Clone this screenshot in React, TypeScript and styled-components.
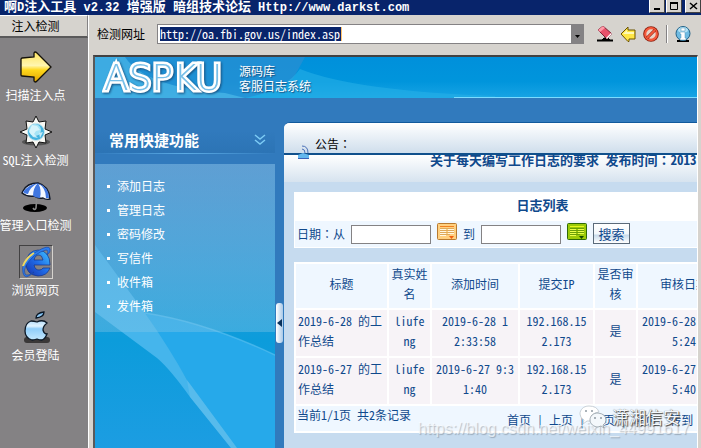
import React from "react";
import styled, { createGlobalStyle, css } from "styled-components";

const songti = `"Noto Sans Mono CJK SC", "Noto Sans CJK SC", "Liberation Mono", monospace`;

const Global = createGlobalStyle`
  * { box-sizing: border-box; }
  body { margin: 0; overflow: hidden; background: #d6d3ce; }
  button, input { font: inherit; color: inherit; }
  button { padding: 0; border: 0; background: none; cursor: pointer; }
`;

const Window = styled.div`
  position: relative;
  display: flex;
  flex-direction: column;
  min-height: 100vh;
  overflow: hidden;
  background: #d6d3ce;
  color: #000;
  font: 12px/16px ${songti};
`;

const TitleBar = styled.header`
  display: flex;
  justify-content: space-between;
  align-items: flex-start;
  height: 15px;
  padding-left: 4px;
  background: #08246b;
  color: #fff;
`;

const Title = styled.h1`
  margin: 0;
  font-size: 13px;
  line-height: 12px;
  font-weight: 700;
  white-space: pre;
`;

const TitleLatin = styled.span`
  font: 700 12px/12px "Liberation Mono", monospace;
`;

const WindowButtons = styled.div`
  display: flex;
  gap: 1px;
`;

const WindowButton = styled.button`
  display: grid;
  place-items: center;
  width: 16px;
  height: 13px;
  background: #d6d3ce;
  border: solid;
  border-width: 0 1px 1px;
  border-color: #fff #424142 #424142 #fff;
  &:last-child { margin-left: 2px; }
`;

const Body = styled.div`
  flex: 1;
  display: grid;
  grid-template-columns: 89px minmax(0, 1fr);
`;

const Sidebar = styled.nav`
  display: flex;
  flex-direction: column;
  background: #848284;
  border-right: 1px solid #fff;
`;

const SideTab = styled.button`
  height: 23px;
  padding-right: 16px;
  background: #d6d3ce;
  border-top: 1px solid #fff;
  border-right: 1px solid #848284;
  border-bottom: 2px solid #5a595a;
`;

const Tools = styled.div`
  display: flex;
  flex-direction: column;
  gap: 12px;
  padding-top: 12px;
  width: 71px;
`;

const Tool = styled.button`
  display: flex;
  flex-direction: column;
  align-items: center;
  gap: 3px;
  color: #fff;
  white-space: nowrap;
`;

const ToolIcon = styled.span<{ $active?: boolean }>`
  display: grid;
  place-items: center;
  width: 34px;
  height: 34px;
  ${(p) => p.$active && css`
    border: 1px solid;
    border-color: #424142 #d6d3ce #d6d3ce #424142;
  `}
`;

const Work = styled.div`
  display: flex;
  flex-direction: column;
  min-width: 0;
  padding: 0 3px 0 4px;
`;

const Toolbar = styled.div`
  display: flex;
  align-items: center;
  height: 40px;
  padding: 0 7px 2px 4px;
`;

const AddressLabel = styled.label`
  margin-right: 12px;
  white-space: nowrap;
`;

const Combo = styled.div`
  flex: 1;
  display: flex;
  justify-content: space-between;
  height: 20px;
  background: #fff;
  border: 1px solid #848284;
  margin-right: 13px;
`;

const Address = styled.input`
  width: 182px;
  height: 14px;
  margin: 2px 0 0 2px;
  padding: 0;
  border: 0;
  border-right: 1px solid #ffc36b;
  background: #08246b;
  color: #fff;
  outline: none;
`;

const ComboArrow = styled.button`
  width: 12px;
  background: #848284;
`;

const ToolbarIcons = styled.div`
  display: flex;
  align-items: center;
  gap: 7px;
`;

const ToolbarButton = styled.button`
  width: 16px;
  height: 16px;
  svg { display: block; }
`;

const Separator = styled.span`
  width: 2px;
  height: 18px;
  border-left: 1px solid #848284;
  border-right: 1px solid #fff;
`;

const Browser = styled.section`
  flex: 1;
  display: flex;
  flex-direction: column;
  overflow: hidden;
  border: solid;
  border-width: 2px 1px 0 2px;
  border-color: #424142 #fff #fff #5a595a;
  background: #317abd;
`;

const Banner = styled.header`
  position: relative;
  display: flex;
  align-items: center;
  height: 41px;
  padding-left: 9px;
  overflow: hidden;
  background: linear-gradient(#0090db, #0095dc 60%, #18a4e4);
  color: #fff;
`;

const BannerArt = styled.svg`
  position: absolute;
  inset: 0;
`;

const Logo = styled.strong`
  position: relative;
  width: 135px;
  font: 200 36px/38px "DejaVu Sans", sans-serif;
  color: #78bfe8;
  -webkit-text-stroke: 5px #fff;
  paint-order: stroke fill;
  filter: drop-shadow(1px 1px 1px #17507f);
`;

const BannerText = styled.span`
  position: relative;
  line-height: 15px;
  text-shadow: 1px 1px 1px #17507f;
`;

const Site = styled.div`
  flex: 1;
  display: grid;
  grid-template-columns: 180px 9px minmax(0, 1fr);
`;

const MenuColumn = styled.aside`
  display: flex;
  flex-direction: column;
  color: #fff;
`;

const MenuHeading = styled.h2`
  display: flex;
  align-items: center;
  justify-content: space-between;
  height: 56px;
  margin: 0 0 10px;
  padding: 28px 9px 0 14px;
  font-size: 15px;
  line-height: 20px;
  border-bottom: 1px solid;
  border-image: linear-gradient(90deg, #317abd, #5aaae4 50%, #317abd) 1;
  background: linear-gradient(#317abd 60%, #2c74b5);
`;

const MenuBody = styled.div`
  position: relative;
  flex: 1;
  overflow: hidden;
  background: #179fe1;
`;

const MenuArt = styled.svg`
  position: absolute;
  top: 0;
  left: 0;
`;

const MenuList = styled.ul`
  position: relative;
  margin: 0;
  padding: 10px 0 14px 12px;
  list-style: none;
  background: linear-gradient(rgba(115, 170, 215, 0.5), rgba(140, 200, 230, 0.35));
`;

const MenuItem = styled.li`
  display: flex;
  align-items: center;
  gap: 7px;
  height: 24px;
  &::before {
    content: "";
    width: 3px;
    height: 3px;
    background: #fff;
  }
`;

const MenuLink = styled.a`
  color: #fff;
  text-decoration: none;
`;

const Splitter = styled.div`
  padding: 205px 1px 0;
`;

const SplitHandle = styled.button`
  display: grid;
  place-items: center;
  width: 7px;
  height: 40px;
  border-radius: 3px;
  background: linear-gradient(90deg, #fff, #a9c9e8);
`;

const Main = styled.main`
  margin-top: 24px;
  min-width: 0;
  overflow: hidden;
  border-top: 1px solid #10599c;
  border-top-left-radius: 6px;
  background: #c6dbef;
  color: #10498c;
`;

const Colon = styled.span`
  font-family: "Noto Sans CJK TC", sans-serif;
`;

const Notice = styled.div`
  display: flex;
  align-items: flex-end;
  height: 32px;
  gap: 5px;
  padding: 0 0 0 14px;
  color: #000;
  background: linear-gradient(#fff, #cfdeec);
  border-bottom: 2px solid #10508c;
`;

const NoticeIcon = styled.svg`
  position: relative;
  margin-bottom: -7px;
`;

const NoticeLabel = styled.span`
  line-height: 18px;
`;

const Marquee = styled.div`
  height: 27px;
  padding-left: 146px;
  overflow: hidden;
  font-size: 13px;
  line-height: 10px;
  font-weight: 700;
  white-space: nowrap;
  background: linear-gradient(#fff, #d6e3ef);
`;

const Panels = styled.div`
  display: flex;
  flex-direction: column;
  gap: 14px;
  min-width: 507px;
  padding: 10px 0 16px 10px;
`;

const SearchPanel = styled.form`
  width: 497px;
  padding: 0 1px 1px;
  background: #fff;
`;

const PanelTitle = styled.h3`
  margin: 0;
  font-size: 13px;
  line-height: 26px;
  padding-bottom: 3px;
  text-align: center;
`;

const SearchRow = styled.div`
  display: flex;
  align-items: center;
  height: 26px;
  padding-left: 2px;
  gap: 6px;
  background: #eff7ff;
`;

const DateInput = styled.input`
  width: 80px;
  height: 19px;
  border: 1px solid #848284;
  background: #fff;
`;

const CalendarButton = styled.button`
  height: 18px;
  margin-bottom: 4px;
  svg { display: block; }
`;

const SearchButton = styled.button`
  width: 37px;
  height: 21px;
  margin-bottom: 2px;
  font-size: 13px;
  line-height: 17px;
  border: 1px solid #5a6a7a;
  background: linear-gradient(#fff, #f3f8fc 50%, #c9dced 60%, #fff);
`;

const LogTable = styled.table`
  table-layout: fixed;
  width: 497px;
  border-collapse: collapse;
  word-break: break-all;
  white-space: pre-line;
  line-height: 20px;
`;

const cell = css`
  border: 2px solid #fff;
  padding: 0 3px 4px;
  text-align: center;
  font-weight: 400;
`;

const HeadCell = styled.th`
  ${cell}
  height: 46px;
  padding: 0 2px 4px;
  background: #eff7ff;
`;

const Cell = styled.td<{ $left?: boolean }>`
  ${cell}
  height: 48px;
  background: #f7f3f7;
  ${(p) => p.$left && "text-align: left; padding-left: 2px;"}
`;

const FootCell = styled.td`
  height: 27px;
  padding: 0 0 2px 1px;
  border: 2px solid #fff;
  background: #eff7ff;
`;

const FootRow = styled.div`
  display: flex;
  line-height: 18px;
  white-space: pre;
`;

const Pager = styled.span`
  margin-left: 96px;
  padding-top: 5px;
`;

const PageLink = styled.a`
  color: inherit;
  text-decoration: none;
`;

const Watermark = styled.div`
  position: absolute;
  right: 21px;
  bottom: 20px;
  display: flex;
  align-items: center;
  gap: 5px;
  font: 17px/24px "Noto Sans CJK SC", sans-serif;
  color: #f4f8fc;
  text-shadow: 1px 1px 1px #444, 0 0 1px #666;
`;

const UrlMark = styled.div`
  position: absolute;
  right: 11px;
  bottom: 11px;
  font: 16px/18px "Liberation Sans", sans-serif;
  color: rgba(255, 255, 255, 0.6);
  text-shadow: 1px 1px 1px rgba(90, 100, 110, 0.4);
`;

const ArrowIcon = () => (
  <svg width="32" height="32" viewBox="0 0 32 32">
    <defs>
      <linearGradient id="gold" x1="0" y1="0" x2="0" y2="1">
        <stop offset="0" stopColor="#ffe45e" /><stop offset=".45" stopColor="#fff6b0" />
        <stop offset=".6" stopColor="#ffd81c" /><stop offset="1" stopColor="#e0a300" />
      </linearGradient>
    </defs>
    <path d="M2 7l12-1V2q1-2 3 0l14 14-14 14q-2 2-3 0v-4L2 25q-1 0-1-1V8z" fill="url(#gold)" stroke="#15120a" strokeWidth="1.3" />
  </svg>
);

const CompassIcon = () => (
  <svg width="32" height="32" viewBox="0 0 32 32">
    <ellipse cx="16" cy="26" rx="14" ry="3.5" fill="#555" />
    <path d="M16 0l3 6 7-1-1 8 7 3-7 3 1 8-7-1-3 6-3-6-7 1 1-8-7-3 7-3-1-8 7 1z" fill="#f8f8f4" stroke="#111" strokeWidth="1" />
    <circle cx="16" cy="16" r="8.5" fill="#45b3df" stroke="#cfe8ee" />
    <circle cx="15" cy="14" r="6" fill="#a7e4f6" />
    <path d="M12 9l5 1 3 4-4 1-2 3 4 4-5-1-4-5zM19 17l4-1-3 6z" fill="#e3f8fc" opacity=".8" />
  </svg>
);

const UmbrellaIcon = () => (
  <svg width="32" height="32" viewBox="0 0 32 32">
    <ellipse cx="15" cy="27" rx="12" ry="4" fill="#000" />
    <path d="M17 14l-1 13q-1 3-3 0" fill="none" stroke="#888" strokeWidth="1.600" />
    <path d="M3 10Q7 2 18 2q11 3 12 16-4 1-7-1-5 1-9-2-7 1-12-3z" fill="#f4f8ff" stroke="#101828" strokeWidth="1.4" />
    <path d="M18 2Q8 4 3 11q2 2 5 2 2-7 10-11zM18 2q-5 5-5 13 3 2 7 2 2-8-2-15zM18 2q8 5 8 15l3 0Q29 6 18 2z" fill="#3f76e0" />
  </svg>
);

const ExplorerIcon = () => (
  <svg width="32" height="32" viewBox="0 0 32 32">
    <defs>
      <linearGradient id="ie" x1="1" y1="0" x2="0" y2="1">
        <stop offset="0" stopColor="#42c8ff" /><stop offset=".5" stopColor="#206ce8" /><stop offset="1" stopColor="#1830a8" />
      </linearGradient>
    </defs>
    <path d="M30 19H14q1 5 5 5 3 0 4-2h7q-3 8-12 8Q6 29 6 17 7 5 18 4q12 1 12 15zM14 14h9q-1-5-4-5-4 0-5 5z" fill="url(#ie)" stroke="#123289" strokeWidth=".7" />
    <path d="M3 27Q0 16 16 6 29-2 30 3q1 3-3 6 2-5-1-5-5 1-12 6Q2 21 5 28q2 3 9-2-9 9-11 1z" fill="#2d7ded" stroke="#173f9c" strokeWidth=".6" />
    <path d="M3 20Q6 12 14 7" fill="none" stroke="#f0d860" strokeWidth="2" />
  </svg>
);

const AppleIcon = () => (
  <svg width="32" height="32" viewBox="0 0 32 32">
    <defs>
      <linearGradient id="apple" x1="0" y1="0" x2="0" y2="1">
        <stop offset="0" stopColor="#70b8f0" /><stop offset=".5" stopColor="#e0f3ff" />
        <stop offset=".6" stopColor="#8fcdfa" /><stop offset="1" stopColor="#c4e8ff" />
      </linearGradient>
    </defs>
    <rect x="4" y="26" width="26" height="6" rx="3" fill="#3a3838" />
    <path d="M17 11q6-3 10 1-4 3-4 7 1 4 4 4-2 5-5 6-3 0-5-1-3 1-5 1Q5 27 5 20q0-8 6-10 3 0 6 1zM16 7q0-5 8-6 0 5-8 6z" fill="url(#apple)" stroke="#0c1826" strokeWidth="1.3" />
  </svg>
);

const EraserIcon = () => (
  <svg width="16" height="16" viewBox="0 0 16 16">
    <path d="M0 14h5l2-2h4l2 2h3v1H0z" fill="#000" stroke="#000" />
    <path d="M1 4l5-4 9 8-5 5z" fill="#e8506a" stroke="#7c2234" />
    <path d="M1 4l5-4 2 2-5 4z" fill="#ff9aa8" />
    <path d="M10 13l5-5-1-1-5 5z" fill="#fff" />
  </svg>
);

const BackIcon = () => (
  <svg width="16" height="16" viewBox="0 0 16 16">
    <path d="M1 8l7-7v3h7v9H9v2.500H8z" fill="#ffe645" stroke="#6b5200" />
    <path d="M3 8l4-4v2h7v2z" fill="#fff9b8" />
  </svg>
);

const StopIcon = () => (
  <svg width="16" height="16" viewBox="0 0 16 16">
    <circle cx="8" cy="8" r="7.800" fill="#8c1c0c" />
    <circle cx="8" cy="8" r="5.800" fill="#e8d4c8" stroke="#f45a3c" strokeWidth="2.200" />
    <path d="M4 12l8-8" stroke="#8c1c0c" strokeWidth="3" />
    <path d="M4 12l8-8" stroke="#f45a3c" strokeWidth="2" />
  </svg>
);

const InfoIcon = () => (
  <svg width="16" height="16" viewBox="0 0 16 16">
    <path d="M2 14h12v2H2z" fill="#000" />
    <circle cx="8" cy="7.500" r="7" fill="#6fbbe2" stroke="#246287" />
    <ellipse cx="8" cy="4" rx="5" ry="3" fill="#b5e2f5" />
    <path d="M6 2h4v3H6zM5 6h5v6h1v2H5v-2h1V8H5z" fill="#fff" stroke="#5597b8" strokeWidth=".5" />
  </svg>
);

const CalendarIcon = ({ tone }: { tone: "orange" | "green" }) => {
  const [edge, fill, line] = tone === "orange" ? ["#b87a30", "#ffd080", "#fff8e4"] : ["#2f6a08", "#9ccb08", "#eaff4a"];
  return (
    <svg width="20" height="18" viewBox="0 0 20 18">
      <rect x=".5" y=".5" width="19" height="16" rx="1" fill={fill} stroke={edge} />
      <path d="M3 3.500h14" stroke={tone === "orange" ? "#f08020" : "#e8f820"} />
      <path d="M3 6.500h6M3 8.500h6M3 10.500h6M3 12.500h6M11 6.500h6M11 8.500h6M11 10.500h6" stroke={line} />
      <path d="M3 5.500h14M3 7.500h14M3 9.500h14M3 11.500h10" stroke={edge} opacity=".45" />
      <path d="M12 13h5l-2.500 3z" fill={tone === "orange" ? "#f06010" : "#174a00"} />
    </svg>
  );
};

const WeChatIcon = () => (
  <svg width="28" height="24" viewBox="0 0 28 24">
    <path d="M10 1C4 1 1 5 1 9q0 4 4 6l-1 4 4-3h4q-1-8 8-9-2-6-10-6z" fill="#fff" stroke="#b4bec6" strokeWidth=".7" />
    <path d="M19 8c-5 0-8 3-8 7s4 7 8 7l3-1 3 2-1-3q3-2 3-5 0-6-8-7z" fill="#f4f8fb" stroke="#8f9aa2" strokeWidth=".8" />
    <circle cx="7" cy="6" r="1" fill="#8f9aa2" /><circle cx="13" cy="6" r="1" fill="#8f9aa2" />
    <circle cx="16" cy="13" r="1" fill="#8f9aa2" /><circle cx="22" cy="13" r="1" fill="#8f9aa2" />
  </svg>
);

const tools = [
  { name: "扫描注入点", icon: <ArrowIcon /> },
  { name: "SQL注入检测", icon: <CompassIcon /> },
  { name: "管理入口检测", icon: <UmbrellaIcon /> },
  { name: "浏览网页", icon: <ExplorerIcon />, active: true },
  { name: "会员登陆", icon: <AppleIcon /> },
];

const menu = ["添加日志", "管理日志", "密码修改", "写信件", "收件箱", "发件箱"];

const columns = [
  { label: "标题", width: 93 },
  { label: "真实姓名", width: 43 },
  { label: "添加时间", width: 88 },
  { label: "提交IP", width: 75 },
  { label: "是否审核", width: 43 },
  { label: "审核日期", width: 94 },
  { label: "", width: 61 },
];

const logs = [
  { title: "2019-6-28 的工作总结", name: "liufeng", added: "2019-6-28 1\n2:33:58", ip: "192.168.152.173", ok: "是", checked: "2019-6-28 14:3\n5:24" },
  { title: "2019-6-27 的工作总结", name: "liufeng", added: "2019-6-27 9:3\n1:40", ip: "192.168.152.173", ok: "是", checked: "2019-6-27 10:3\n5:40" },
];

const pages = ["首页", "上页", "下页", "尾页"];

export default function App() {
  return (
    <>
      <Global />
      <Window>
        <TitleBar>
          <Title>
            啊<TitleLatin>D</TitleLatin>注入工具<TitleLatin> v2.32 </TitleLatin>增强版<TitleLatin> </TitleLatin>暗组技术论坛
            <TitleLatin> Http://www.darkst.com</TitleLatin>
          </Title>
          <WindowButtons>
            <WindowButton aria-label="最小化"><svg width="10" height="10"><path d="M2 7h6v2H2z" /></svg></WindowButton>
            <WindowButton aria-label="最大化"><svg width="10" height="10"><path d="M1.500 1.500h7v7h-7z" fill="none" stroke="#000" /><path d="M1 1h8v2H1z" /></svg></WindowButton>
            <WindowButton aria-label="关闭"><svg width="10" height="10"><path d="M2 2l7 6M9 2l-7 6" stroke="#000" strokeWidth="1.500" /></svg></WindowButton>
          </WindowButtons>
        </TitleBar>
        <Body>
          <Sidebar>
            <SideTab>注入检测</SideTab>
            <Tools>
              {tools.map((t) => (
                <Tool key={t.name}>
                  <ToolIcon $active={t.active}>{t.icon}</ToolIcon>
                  {t.name}
                </Tool>
              ))}
            </Tools>
          </Sidebar>
          <Work>
            <Toolbar>
              <AddressLabel htmlFor="address">检测网址</AddressLabel>
              <Combo>
                <Address id="address" defaultValue="http://oa.fbi.gov.us/index.asp" />
                <ComboArrow aria-label="展开"><svg width="7" height="4"><path d="M1 0h5L3.500 3z" /></svg></ComboArrow>
              </Combo>
              <ToolbarIcons>
                <ToolbarButton aria-label="清除"><EraserIcon /></ToolbarButton>
                <ToolbarButton aria-label="后退"><BackIcon /></ToolbarButton>
                <ToolbarButton aria-label="停止"><StopIcon /></ToolbarButton>
                <Separator />
                <ToolbarButton aria-label="关于"><InfoIcon /></ToolbarButton>
              </ToolbarIcons>
            </Toolbar>
            <Browser>
              <Banner>
                <BannerArt width="100%" height="41">
                  <path d="M0 0h210L198 22Q185 34 150 41H0z" fill="#2b8fd2" opacity=".7" />
                  <path d="M0 0h30Q50 30 130 36l20 5H0z" fill="#5cc8f0" opacity=".5" />
                  <path d="M205 12Q260 34 400 39v2H150q40-8 55-29z" fill="#28b0e8" opacity=".55" />
                  <path d="M359 40.500H1200" stroke="#7bdcff" />
                </BannerArt>
                <Logo>ASPKU</Logo>
                <BannerText>源码库<br />客服日志系统</BannerText>
              </Banner>
              <Site>
                <MenuColumn>
                  <MenuHeading>
                    常用快捷功能
                    <svg width="12" height="12" viewBox="0 0 12 12"><path d="M1 1l5 4 5-4M1 6l5 4 5-4" fill="none" stroke="#7ccbf5" strokeWidth="1.500" /></svg>
                  </MenuHeading>
                  <MenuBody>
                    <MenuArt width="180" height="284" viewBox="0 0 180 284">
                      <defs>
                        <linearGradient id="sky" x1="0" y1="0" x2="0" y2="1">
                          <stop offset="0" stopColor="#4a94d0" /><stop offset=".35" stopColor="#2a9bd8" />
                          <stop offset=".62" stopColor="#0c9cdb" /><stop offset="1" stopColor="#1c9de2" />
                        </linearGradient>
                      </defs>
                      <path d="M0 0h180v284H0z" fill="url(#sky)" />
                      <path d="M50 149Q110 158 180 191v93h-38Q110 250 92 216z" fill="#26a9ea" />
                      <path d="M50 149Q110 158 180 191" fill="none" stroke="#55bdf0" strokeWidth="1.500" opacity=".7" />
                      <path d="M0 81L50 149Q75 185 92 216L142 284h-6L95 233Q75 205 62 194L0 148z" fill="#45b5ec" />
                      <path d="M92 216L142 284h-6L95 233z" fill="#74c6ee" opacity=".4" />
                    </MenuArt>
                    <MenuList>
                      {menu.map((m) => (
                        <MenuItem key={m}><MenuLink href="#">{m}</MenuLink></MenuItem>
                      ))}
                    </MenuList>
                  </MenuBody>
                </MenuColumn>
                <Splitter>
                  <SplitHandle aria-label="收起菜单"><svg width="5" height="8"><path d="M5 0v8L0 4z" fill="#08305a" /></svg></SplitHandle>
                </Splitter>
                <Main>
                  <Notice>
                    <NoticeIcon width="12" height="16" viewBox="0 0 12 16">
                      <path d="M4 2q6 0 6 7M4 5q3 0 3 4" fill="none" stroke="#4a70b8" />
                      <path d="M0 15V11l5-2 6 2v4z" fill="#64b8ee" />
                      <path d="M0 14.500h11" stroke="#3a62b8" />
                    </NoticeIcon>
                    <NoticeLabel>公告<Colon lang="zh-TW">：</Colon></NoticeLabel>
                  </Notice>
                  <Marquee>关于每天编写工作日志的要求 发布时间<Colon lang="zh-TW">：</Colon>2013</Marquee>
                  <Panels>
                    <SearchPanel onSubmit={(e) => e.preventDefault()}>
                      <PanelTitle>日志列表</PanelTitle>
                      <SearchRow>
                        <label htmlFor="from">日期<Colon lang="zh-TW">：</Colon>从</label>
                        <DateInput id="from" />
                        <CalendarButton type="button" aria-label="选择开始日期"><CalendarIcon tone="orange" /></CalendarButton>
                        <label htmlFor="to">到</label>
                        <DateInput id="to" />
                        <CalendarButton type="button" aria-label="选择结束日期"><CalendarIcon tone="green" /></CalendarButton>
                        <SearchButton>搜索</SearchButton>
                      </SearchRow>
                    </SearchPanel>
                    <LogTable>
                      <colgroup>
                        {columns.map((c) => <col key={c.label} width={c.width} />)}
                      </colgroup>
                      <thead>
                        <tr>{columns.map((c) => <HeadCell key={c.label}>{c.label}</HeadCell>)}</tr>
                      </thead>
                      <tbody>
                        {logs.map((l) => (
                          <tr key={l.title}>
                            <Cell $left>{l.title}</Cell>
                            <Cell>{l.name}</Cell>
                            <Cell>{l.added}</Cell>
                            <Cell>{l.ip}</Cell>
                            <Cell>{l.ok}</Cell>
                            <Cell>{l.checked}</Cell>
                            <Cell />
                          </tr>
                        ))}
                      </tbody>
                      <tfoot>
                        <tr>
                          <FootCell colSpan={columns.length}>
                            <FootRow>
                              当前1/1页 共2条记录
                              <Pager>
                                {pages.map((p, i) => (
                                  <React.Fragment key={p}>{i > 0 && " | "}<PageLink href="#">{p}</PageLink></React.Fragment>
                                ))}
                                {"  "}转到
                              </Pager>
                            </FootRow>
                          </FootCell>
                        </tr>
                      </tfoot>
                    </LogTable>
                  </Panels>
                </Main>
              </Site>
            </Browser>
          </Work>
        </Body>
        <UrlMark>https://blog.csdn.net/weixin_44991617</UrlMark>
        <Watermark><WeChatIcon />潇湘信安</Watermark>
      </Window>
    </>
  );
}
